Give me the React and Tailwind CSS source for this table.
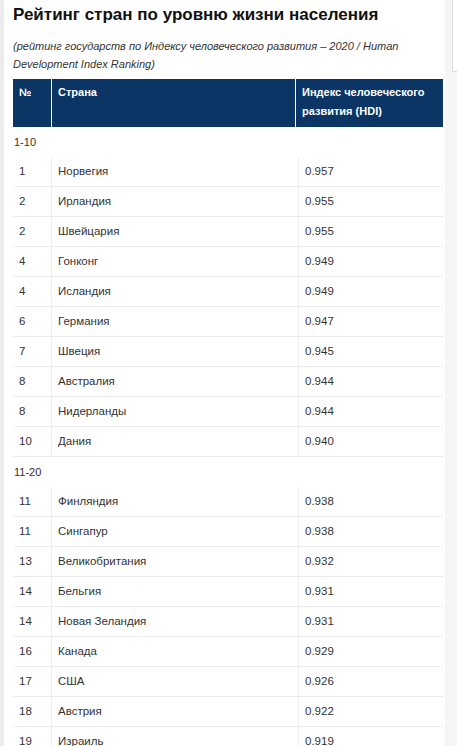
import React from 'react';

const groups = [
  {
    label: '1-10',
    rows: [
      ['1', 'Норвегия', '0.957'],
      ['2', 'Ирландия', '0.955'],
      ['2', 'Швейцария', '0.955'],
      ['4', 'Гонконг', '0.949'],
      ['4', 'Исландия', '0.949'],
      ['6', 'Германия', '0.947'],
      ['7', 'Швеция', '0.945'],
      ['8', 'Австралия', '0.944'],
      ['8', 'Нидерланды', '0.944'],
      ['10', 'Дания', '0.940'],
    ],
  },
  {
    label: '11-20',
    rows: [
      ['11', 'Финляндия', '0.938'],
      ['11', 'Сингапур', '0.938'],
      ['13', 'Великобритания', '0.932'],
      ['14', 'Бельгия', '0.931'],
      ['14', 'Новая Зеландия', '0.931'],
      ['16', 'Канада', '0.929'],
      ['17', 'США', '0.926'],
      ['18', 'Австрия', '0.922'],
      ['19', 'Израиль', '0.919'],
    ],
  },
];

export default function App() {
  return (
    <div className="flex h-[746px] overflow-hidden bg-[#f5f5f5] font-['Liberation_Sans',Arial,sans-serif]">
      <div className="w-[4px] shrink-0 bg-[#ececec]" />
      <div className="w-[441px] shrink-0 bg-white pl-[9px] pr-[2px]">
        <h1 className="pt-[5px] text-[17px] font-bold leading-[20px] text-[#111]">
          Рейтинг стран по уровню жизни населения
        </h1>
        <p className="mt-[12px] text-[11px] italic leading-[18px] text-[#333]">
          (рейтинг государств по Индексу человеческого развития – 2020 / Human Development Index Ranking)
        </p>

        <div className="mt-[6px] grid h-[48px] grid-cols-[39px_244px_1fr] bg-[#0a3565] text-[11px] font-bold leading-[19px] text-white">
          <div className="border-r border-white px-[6px] pt-[4px]">№</div>
          <div className="border-r border-white px-[6px] pt-[4px]">Страна</div>
          <div className="px-[6px] pt-[4px]">Индекс человеческого развития (HDI)</div>
        </div>

        {groups.map((g) => (
          <div key={g.label}>
            <div className="flex h-[30px] items-center pl-[1px] text-[11px] text-[#3d2e26]">
              {g.label}
            </div>
            {g.rows.map((r, i) => (
              <div
                key={i}
                className="grid h-[30px] grid-cols-[39px_247px_1fr] border-b border-[#ececec] text-[11.5px] text-[#333]"
              >
                <div className="flex items-center border-r border-[#eeeeee] pl-[6px]">{r[0]}</div>
                <div className="flex items-center border-r border-[#eeeeee] pl-[6px]">{r[1]}</div>
                <div className="flex items-center pl-[6px]">{r[2]}</div>
              </div>
            ))}
          </div>
        ))}
      </div>
      <div className="flex-1 pl-[7px]">
        <div className="h-[72px] border-b border-l border-[#dcdcdc] bg-white" />
      </div>
    </div>
  );
}
